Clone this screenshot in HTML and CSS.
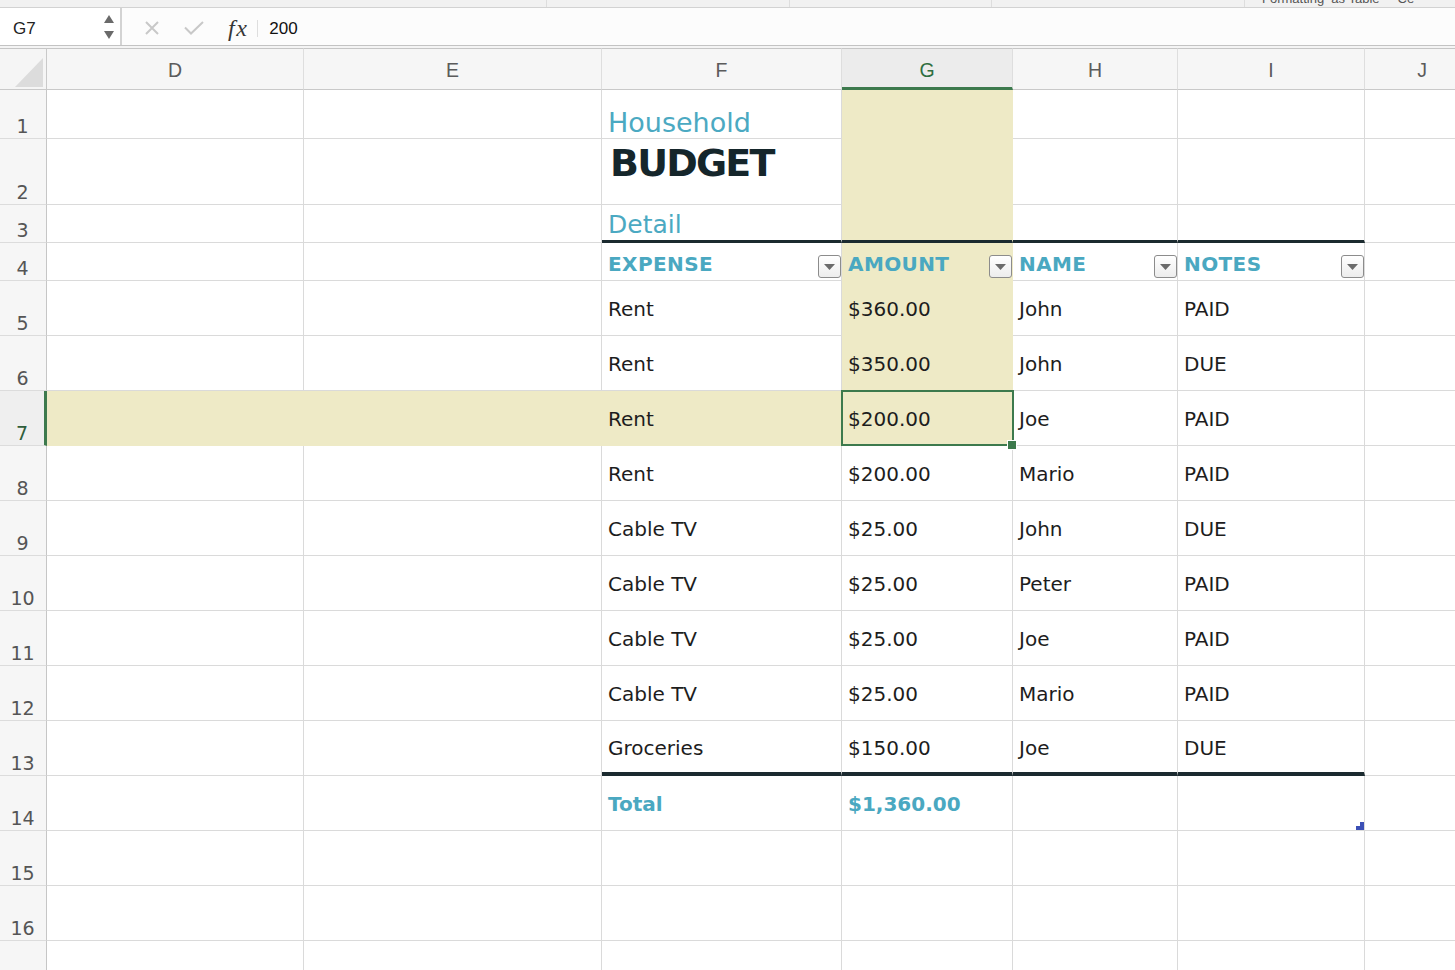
FILE: index.html
```html
<!DOCTYPE html>
<html>
<head>
<meta charset="utf-8">
<title>Household Budget</title>
<link rel="stylesheet" href="styles.css">
</head>
<body>
<div class="strip">
  <div class="seg seg1"></div>
  <div class="seg seg2"></div>
  <div class="seg seg3"></div>
  <div class="seg seg4"></div>
  <div class="seg seg5"><span>Formatting &nbsp;as Table</span><span>Ce</span></div>
</div>
<div class="fbar">
  <div class="namebox">
    <span class="nm">G7</span>
    <svg class="spin" width="10" height="24" viewBox="0 0 10 24"><path d="M5 0L10 8H0Z" fill="#6a6a6a"/><path d="M0 16H10L5 24Z" fill="#6a6a6a"/></svg>
  </div>
  <svg class="ic-x" width="14" height="14" viewBox="0 0 14 14"><path d="M1 1L13 13M13 1L1 13" stroke="#c8c8c8" stroke-width="2" fill="none"/></svg>
  <svg class="ic-ok" width="20" height="14" viewBox="0 0 20 14"><path d="M1 6.5L7 12.5L19 1" stroke="#c8c8c8" stroke-width="2" fill="none"/></svg>
  <span class="fx">fx</span>
  <span class="fsep"></span>
  <span class="fval">200</span>
</div>
<div class="gap"></div>
<div class="sheet">
  <div class="corner"><svg width="47" height="40" viewBox="0 0 47 40"><path d="M15 38H43V9Z" fill="#dcdcdc"/></svg></div>
  <div class="ch">D</div><div class="ch">E</div><div class="ch">F</div><div class="ch sel">G</div><div class="ch">H</div><div class="ch">I</div><div class="ch">J</div>

  <div class="rh">1</div><div class="c"></div><div class="c"></div><div class="c t-house">Household</div><div class="c hl"></div><div class="c"></div><div class="c"></div><div class="c"></div>
  <div class="rh">2</div><div class="c"></div><div class="c"></div><div class="c t-budget">BUDGET</div><div class="c hl"></div><div class="c"></div><div class="c"></div><div class="c"></div>
  <div class="rh">3</div><div class="c"></div><div class="c"></div><div class="c t-detail tt">Detail</div><div class="c hl tt"></div><div class="c tt"></div><div class="c tt"></div><div class="c"></div>
  <div class="rh">4</div><div class="c"></div><div class="c"></div>
  <div class="c th"><span>EXPENSE</span><span class="fbtn"><svg width="11" height="6" viewBox="0 0 11 6"><path d="M0 0H11L5.5 6Z" fill="#6b6b6b"/></svg></span></div>
  <div class="c th hl"><span>AMOUNT</span><span class="fbtn"><svg width="11" height="6" viewBox="0 0 11 6"><path d="M0 0H11L5.5 6Z" fill="#6b6b6b"/></svg></span></div>
  <div class="c th"><span>NAME</span><span class="fbtn"><svg width="11" height="6" viewBox="0 0 11 6"><path d="M0 0H11L5.5 6Z" fill="#6b6b6b"/></svg></span></div>
  <div class="c th"><span>NOTES</span><span class="fbtn"><svg width="11" height="6" viewBox="0 0 11 6"><path d="M0 0H11L5.5 6Z" fill="#6b6b6b"/></svg></span></div>
  <div class="c"></div>

  <div class="rh">5</div><div class="c"></div><div class="c"></div><div class="c">Rent</div><div class="c hl">$360.00</div><div class="c">John</div><div class="c">PAID</div><div class="c"></div>
  <div class="rh">6</div><div class="c"></div><div class="c"></div><div class="c">Rent</div><div class="c hl">$350.00</div><div class="c">John</div><div class="c">DUE</div><div class="c"></div>
  <div class="rh sel">7</div><div class="c hl"></div><div class="c hl"></div><div class="c hl">Rent</div><div class="c hl act">$200.00</div><div class="c">Joe</div><div class="c">PAID</div><div class="c"></div>
  <div class="rh">8</div><div class="c"></div><div class="c"></div><div class="c">Rent</div><div class="c">$200.00</div><div class="c">Mario</div><div class="c">PAID</div><div class="c"></div>
  <div class="rh">9</div><div class="c"></div><div class="c"></div><div class="c">Cable TV</div><div class="c">$25.00</div><div class="c">John</div><div class="c">DUE</div><div class="c"></div>
  <div class="rh">10</div><div class="c"></div><div class="c"></div><div class="c">Cable TV</div><div class="c">$25.00</div><div class="c">Peter</div><div class="c">PAID</div><div class="c"></div>
  <div class="rh">11</div><div class="c"></div><div class="c"></div><div class="c">Cable TV</div><div class="c">$25.00</div><div class="c">Joe</div><div class="c">PAID</div><div class="c"></div>
  <div class="rh">12</div><div class="c"></div><div class="c"></div><div class="c">Cable TV</div><div class="c">$25.00</div><div class="c">Mario</div><div class="c">PAID</div><div class="c"></div>
  <div class="rh">13</div><div class="c"></div><div class="c"></div><div class="c tb">Groceries</div><div class="c tb">$150.00</div><div class="c tb">Joe</div><div class="c tb">DUE</div><div class="c"></div>
  <div class="rh">14</div><div class="c"></div><div class="c"></div><div class="c tot">Total</div><div class="c tot">$1,360.00</div><div class="c"></div><div class="c handle-cell"><svg class="resize" width="8" height="8" viewBox="0 0 8 8"><path d="M4 0H8V8H0V4H4Z" fill="#3b4fb5"/></svg></div><div class="c"></div>
  <div class="rh">15</div><div class="c"></div><div class="c"></div><div class="c"></div><div class="c"></div><div class="c"></div><div class="c"></div><div class="c"></div>
  <div class="rh">16</div><div class="c"></div><div class="c"></div><div class="c"></div><div class="c"></div><div class="c"></div><div class="c"></div><div class="c"></div>
  <div class="rh"></div><div class="c"></div><div class="c"></div><div class="c"></div><div class="c"></div><div class="c"></div><div class="c"></div><div class="c"></div>
</div>
</body>
</html>
```
FILE: styles.css
```css
* { box-sizing: border-box; }
html, body { margin: 0; padding: 0; }
body {
  width: 1455px;
  height: 970px;
  overflow: hidden;
  background: #ffffff;
  font-family: "DejaVu Sans", Verdana, sans-serif;
  color: #1d1d1d;
}

/* top toolbar remnant */
.strip {
  height: 8px;
  background: #f1f1f1;
  border-bottom: 1px solid #d2d2d2;
  display: flex;
  overflow: hidden;
}
.seg { height: 100%; border-right: 1px solid #dddddd; }
.seg1 { width: 547px; }
.seg2 { width: 243px; }
.seg3 { width: 202px; }
.seg4 { width: 253px; }
.seg5 {
  flex: 1;
  border-right: none;
  display: flex;
  align-items: flex-start;
  gap: 18px;
  padding-left: 17px;
  font-family: "Liberation Sans", Arial, sans-serif;
  font-size: 13px;
  color: #555555;
  white-space: nowrap;
}
.seg5 span { line-height: 13px; margin-top: -8px; }

/* formula bar */
.fbar {
  height: 38px;
  display: flex;
  align-items: center;
  background: #fcfcfc;
  border-bottom: 1px solid #c3c3c3;
}
.namebox {
  width: 122px;
  height: 100%;
  background: #ffffff;
  border-right: 2px solid #d3d3d3;
  display: flex;
  align-items: center;
  justify-content: space-between;
  padding: 5px 6px 0 13px;
}
.nm {
  font-family: "Liberation Sans", Arial, sans-serif;
  font-size: 17px;
  color: #222222;
}
.spin { display: block; margin-top: -4px; }
.ic-x { margin: 3px 0 0 23px; display: block; }
.ic-ok { margin: 3px 0 0 25px; display: block; }
.fx {
  margin: 3px 0 0 24px;
  font-family: "Liberation Serif", "Times New Roman", serif;
  font-style: italic;
  font-size: 24px;
  letter-spacing: 1.5px;
  color: #363636;
  line-height: 1;
}
.fsep {
  width: 1px;
  height: 17px;
  margin: 3px 0 0 9px;
  background: #dedede;
}
.fval {
  margin: 4px 0 0 11px;
  font-family: "Liberation Sans", Arial, sans-serif;
  font-size: 17px;
  color: #111111;
}
.gap { height: 2px; background: #f4f4f4; }

/* grid */
.sheet {
  display: grid;
  width: 1480px;
  grid-template-columns: 47px 257px 298px 240px 171px 165px 187px 115px;
  grid-template-rows: 42px 49px 66px 38px 38px repeat(13, 55px);
}
.corner {
  background: #f5f5f5;
  border-top: 1px solid #c6c6c6;
  border-bottom: 1px solid #c9c9c9;
  border-right: 1px solid #c9c9c9;
}
.corner svg { display: block; }
.ch {
  background: #f6f6f6;
  border-top: 1px solid #c6c6c6;
  border-bottom: 1px solid #c9c9c9;
  border-right: 1px solid #dedede;
  display: flex;
  align-items: center;
  justify-content: center;
  padding-top: 2px;
  font-family: "Liberation Sans", Arial, sans-serif;
  font-size: 19.5px;
  color: #5b5b5b;
}
.ch.sel {
  background: #ececec;
  border-bottom: 3px solid #3d7a4d;
  color: #2f6e40;
  padding-top: 4px;
}
.rh {
  background: #f6f6f6;
  border-right: 1px solid #c6c6c6;
  border-bottom: 1px solid #dcdcdc;
  display: flex;
  align-items: flex-end;
  justify-content: center;
  padding: 0 1px 1px 0;
  font-size: 19px;
  color: #555555;
}
.rh.sel {
  background: #efefef;
  border-right: 3px solid #3d7a4d;
  color: #2f5e3b;
  padding-right: 0;
}
.c {
  border-right: 1px solid #dadada;
  border-bottom: 1px solid #dadada;
  display: flex;
  align-items: center;
  padding: 2px 6px 0;
  font-size: 20px;
  color: #1d1d1d;
  white-space: nowrap;
}
.hl { background: #eeeac6; border-color: #eeeac6; }
.tt { border-bottom: 3px solid #1b2a2f; }
.tb { border-bottom: 4px solid #1b2a2f; }

.t-house {
  align-items: flex-end;
  font-size: 27px;
  color: #4ba9c2;
}
.t-budget {
  align-items: flex-start;
  padding: 2px 6px 0 8px;
  font-size: 38px;
  font-weight: bold;
  letter-spacing: -1.8px;
  color: #15262b;
}
.t-detail {
  align-items: flex-end;
  padding-bottom: 1px;
  font-size: 25px;
  color: #4ba9c2;
}
.th {
  justify-content: space-between;
  padding: 4px 0 0 6px;
  font-weight: bold;
  letter-spacing: 0.4px;
  color: #4aa8c1;
}
.fbtn {
  align-self: flex-end;
  margin-bottom: 2px;
  width: 23px;
  height: 23px;
  border: 1px solid #8c8c8c;
  border-radius: 3px;
  background: linear-gradient(#ffffff, #ededed);
  display: flex;
  align-items: center;
  justify-content: center;
}
.fbtn svg { display: block; }
.tot { font-weight: bold; color: #4aa8c1; }

.act { position: relative; }
.act::before {
  content: "";
  position: absolute;
  left: -1px;
  top: -1px;
  right: -2px;
  bottom: -1px;
  border: 2px solid #3d7a4d;
  z-index: 2;
}
.act::after {
  content: "";
  position: absolute;
  right: -5px;
  bottom: -5px;
  width: 8px;
  height: 8px;
  background: #3d7a4d;
  border: 1px solid #ffffff;
  z-index: 3;
}
.handle-cell { position: relative; }
.resize { position: absolute; right: 0; bottom: 0; display: block; }
```
